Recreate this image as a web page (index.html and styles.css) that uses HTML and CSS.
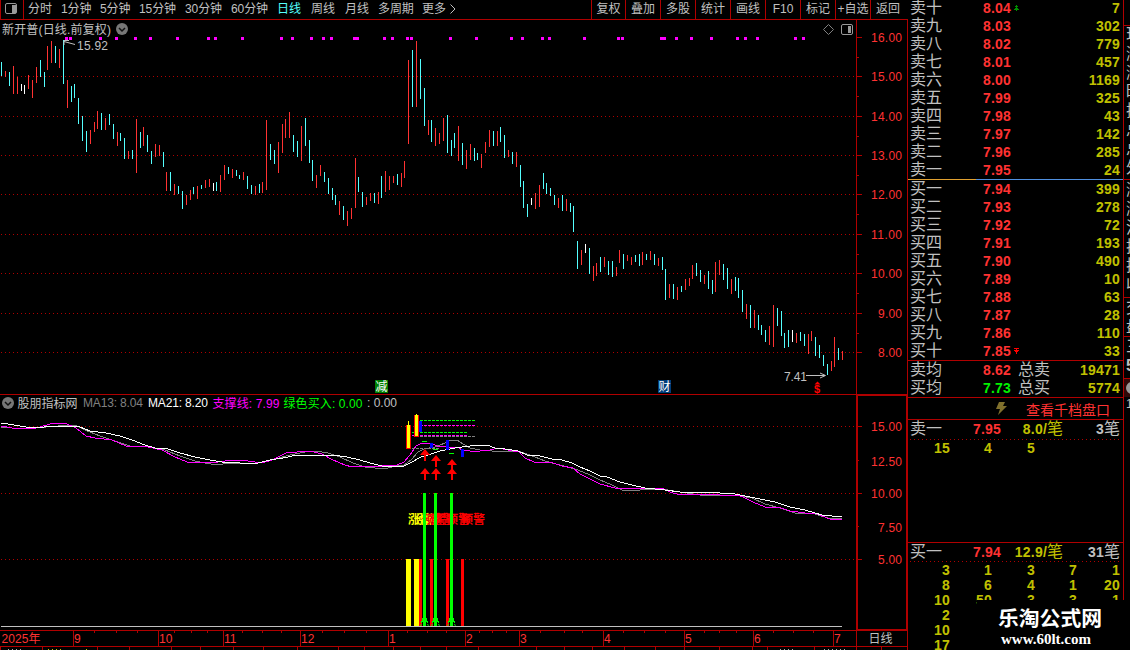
FILE: index.html
```html
<!DOCTYPE html>
<html lang="zh-CN">
<head>
  <meta charset="UTF-8" />
  <meta name="viewport" content="width=device-width, initial-scale=1.0"/>
  <title>新开普 日线</title>
  <link rel="stylesheet" href="styles.css">
</head>
<body>
  <div class="app">
    <main class="charts">
      <header class="toolbar">
        <div class="layout-btn">
          <svg width="13" height="12" viewBox="0 0 13 12"><rect x="0.5" y="0.5" width="11" height="10" rx="1.5" fill="none" stroke="#999"/><path d="M7 2h4v8H7z" fill="#999"/></svg>
        </div>
        <nav class="periods">
          <span>分时</span><span>1分钟</span><span>5分钟</span><span>15分钟</span><span>30分钟</span><span>60分钟</span><span class="active">日线</span><span>周线</span><span>月线</span><span>多周期</span>
          <span>更多<svg width="11" height="12" viewBox="0 0 11 12"><path d="M4.500 1.500l4.500 4.500l-4.500 4.500" fill="none" stroke="#c0c0c0"/></svg></span>
        </nav>
        <div class="tools">
          <span>复权</span><span>叠加</span><span>多股</span><span>统计</span><span>画线</span><span>F10</span><span>标记</span><span>+自选</span><span>返回</span>
        </div>
      </header>

      <svg class="kline" width="908" height="374" viewBox="0 20 908 374">
        <g id="grid"></g>
        <g id="events"></g>
        <g id="bars"></g>
        <path class="frame" d="M856.500 20V394M907.500 20V394"/>
        <g id="priceAxis"></g>
        <text class="label" x="2" y="34" textLength="109">新开普(日线.前复权)</text>
        <circle cx="122" cy="29" r="6" fill="#777"/>
        <path d="M119 28l3 3l3-3" fill="none" stroke="#111" stroke-width="1.500"/>
        <path d="M828.500 24.500l5 5l-5 5l-5-5z" fill="none" stroke="#808080"/>
        <rect x="841.500" y="24.500" width="11" height="10" rx="1.500" fill="none" stroke="#999"/>
        <path d="M848 26h3v7h-3z" fill="#999"/>
        <path class="pointer" d="M75 44.500L64 41.500M64 45V40.500H69"/>
        <text class="label" x="77" y="50" textLength="31">15.92</text>
        <text class="label" x="784" y="381" textLength="23">7.41</text>
        <path class="pointer" d="M806 375.500H825M820 373l5.500 2.500l-5.500 2.500"/>
        <rect x="375" y="380" width="13" height="13" fill="#008000"/>
        <text class="mark" x="375.500" y="391">减</text>
        <rect x="658" y="380" width="13" height="13" fill="#003c78"/>
        <text class="mark" x="658.500" y="391">财</text>
        <path d="M814.500 384.500l3-3l3 3z" fill="#f00"/>
        <text class="dollar" x="814" y="393">$</text>
      </svg>

      <svg class="indicator" width="908" height="236" viewBox="0 394 908 236">
        <g id="subGrid"></g>
        <path class="frame" d="M0 394.500H856"/>
        <path class="frame thick" d="M857 395H907V630H857z"/>
        <g id="subAxis"></g>
        <circle cx="8" cy="403" r="6" fill="#777"/>
        <path d="M5 402l3 3l3-3" fill="none" stroke="#111" stroke-width="1.500"/>
        <text class="label" x="17.500" y="407.500">股朋指标网</text>
        <text class="label grey" x="83" y="407" textLength="60">MA13: 8.04</text>
        <text class="label white" x="148" y="407" textLength="60">MA21: 8.20</text>
        <text class="label magenta" x="212.500" y="407.500" textLength="67">支撑线: 7.99</text>
        <text class="label green" x="283.500" y="407.500" textLength="79">绿色买入: 0.00</text>
        <text class="label" x="367" y="407" textLength="30">: 0.00</text>
        <g id="lines"></g>
        <g id="signals"></g>
      </svg>

      <svg class="timeline" width="908" height="20" viewBox="0 630 908 20">
        <path class="frame" d="M0 630.500H908M0 646.500H908M856.500 631V650M907.500 631V650"/>
        <g id="dates"></g>
        <text class="label" x="868.500" y="643">日线</text>
        <path d="M8 649.500h14M780 649.500h14M824 649.500h24" stroke="#aaa" stroke-dasharray="1 3"/>
        <path d="M48 649.500h14M86 649.500h1" stroke="#c0c000" stroke-dasharray="1 3"/>
      </svg>
    </main>

    <aside class="quote">
      <div class="book" id="sells"></div>
      <div class="ratio"></div>
      <div class="book" id="buys"></div>
      <div class="totals">
        <div class="total-row"><span>卖均</span><b class="up">8.62</b><span>总卖</span><b class="vol">19471</b></div>
        <div class="total-row"><span>买均</span><b class="down">7.73</b><span>总买</span><b class="vol">5774</b></div>
      </div>
      <div class="more">
        <svg width="13" height="13" viewBox="0 0 13 13"><path d="M4 0h6L8 4h4L3 13l2-6H1z" fill="#80702c"/></svg>
        <span>查看千档盘口</span>
      </div>
      <div class="queue sell-queue">
        <div class="queue-head"><span>卖一</span><b class="up">7.95</b><span class="vol"><b>8.0/</b>笔</span><span><b>3</b>笔</span></div>
        <div class="orders first"><b>15</b><b>4</b><b>5</b></div>
      </div>
      <div class="queue buy-queue">
        <div class="queue-head"><span>买一</span><b class="up">7.94</b><span class="vol"><b>12.9/</b>笔</span><span><b>31</b>笔</span></div>
        <div class="orders"><b>3</b><b>1</b><b>3</b><b>7</b><b>1</b></div>
        <div class="orders"><b>8</b><b>6</b><b>4</b><b>1</b><b>20</b></div>
        <div class="orders"><b>10</b><b>50</b><b>3</b><b>3</b><b>1</b></div>
        <div class="orders"><b>2</b></div>
        <div class="orders"><b>10</b></div>
        <div class="orders"><b>17</b></div>
      </div>
    </aside>

    <aside class="edge">
      <div class="edge-group names"><span>现</span><span>涨</span><span>涨</span><span>昨</span><span>振</span><span>总</span><span>总</span><span>外</span></div>
      <div class="edge-group stats"><span>涨</span><span>涨</span><span>流</span><span>换</span><span>换</span><span>收</span></div>
      <div class="edge-group pair"><span>交</span><span>盘</span></div>
      <div class="edge-group pair"><span>三</span><span><b>5</b></span></div>
      <div class="edge-tab"><i></i></div>
      <div class="edge-group last">1</div>
    </aside>

    <div class="watermark">
      <div class="site-name">乐淘公式网</div>
      <div class="site-url">www.60lt.com</div>
    </div>
  </div>

  <script>
  const RED = '#ff3232', CYAN = '#54ffff', WHITE = '#ffffff';

  function put(id, html) {
    document.getElementById(id).innerHTML = html;
  }

  // color, x, high, low
  const bars = `c1 62 76,r5 71 77,c9 72 86,r13 66 94,r17 77 94,w21 84 91,w24 85 94,r28 75 89,r32 80 98,r36 67 83,
c40 60 77,c44 72 87,r47 46 70,r51 41 63,c55 46 63,r59 49 68,c63 40 84,r67 80 108,c71 86 102,c74 84 98,c78 98 124,
c82 116 141,c86 131 152,r90 130 144,r94 122 132,r97 111 129,c101 113 130,r105 118 130,c109 114 125,c113 124 139,
r117 132 146,c120 133 141,c124 138 159,r128 151 159,c132 150 159,r136 119 173,c140 132 148,r143 127 146,c147 135 152,
c151 151 164,r155 144 157,r159 145 156,c163 152 167,r166 172 191,c170 172 191,r174 184 195,c178 186 194,c182 191 209,
r186 195 205,r190 190 200,c193 187 194,r197 186 199,c201 185 189,r205 180 188,r209 179 187,w213 183 191,c216 182 191,
r220 175 192,r224 165 180,c228 167 174,r232 169 178,c236 170 176,c239 175 179,r243 172 180,c247 176 189,c251 185 194,
r255 186 195,c259 184 193,r262 182 193,r266 120 190,c270 144 160,c274 150 164,r278 142 173,r282 124 153,r285 119 138,
r289 112 138,c293 135 152,c297 141 157,r301 126 161,c305 118 146,c309 140 163,c312 160 181,r316 175 188,r320 165 176,
c324 172 182,c328 178 194,c332 188 200,c335 195 205,r339 201 215,c343 206 220,r347 211 226,r351 208 219,r355 158 208,
c358 177 192,c362 192 207,r366 197 205,r370 193 201,c374 193 203,r378 192 204,c381 176 198,r385 171 192,r389 176 190,
r393 176 183,c397 174 185,r401 173 187,r404 161 178,r408 60 144,c412 50 107,r416 41 107,c420 59 99,c424 88 126,
r428 120 135,c431 120 142,r435 128 146,r439 133 144,r443 118 141,c447 115 153,c451 140 156,c454 133 148,r458 126 161,
c462 143 165,r466 150 169,r470 144 160,c474 148 161,c477 153 160,r481 154 168,r485 142 153,r489 130 147,c493 131 146,
r497 131 146,c500 127 142,c504 135 158,r508 150 157,c512 152 164,r516 152 167,c520 165 187,c523 181 208,c527 204 217,
w531 198 205,r535 193 209,r539 185 207,c543 173 189,c546 183 194,c550 188 196,c554 195 205,r558 198 208,c562 195 211,
r566 199 211,c570 203 212,c573 206 232,c577 241 269,r581 250 265,w585 244 253,c589 248 274,r593 266 281,r596 263 276,
c600 257 272,r604 257 267,c608 261 275,c612 261 277,r616 267 276,r619 250 263,c623 254 269,r627 255 261,r631 257 265,
c635 255 262,c639 254 266,r642 252 265,c646 254 260,r650 251 260,c654 254 265,r658 258 266,c662 257 270,c665 269 300,
r669 284 298,c673 284 299,r677 287 300,c681 286 292,r685 279 290,r689 278 286,r692 265 279,c696 263 276,c700 270 282,
r704 275 284,c708 271 289,c712 280 294,r715 262 292,r719 260 275,c723 264 280,c727 268 289,r731 279 294,c735 277 291,
c738 278 298,c742 290 312,r746 304 319,c750 305 328,r754 310 328,c758 315 330,c761 325 335,c765 330 342,r769 326 345,
r773 305 347,c777 308 326,c781 311 336,c784 333 348,c788 330 347,w792 330 342,r796 333 343,c800 332 341,c804 334 346,
r808 334 354,r811 331 341,c815 337 356,c819 345 358,c823 355 366,c827 364 375,r831 361 371,r834 337 367,c838 348 360,
r842 351 360`;
  const barColor = { r: RED, c: CYAN, w: WHITE };
  put('bars', bars.split(',').map(b => {
    const s = b.trim();
    const [x, top, bottom] = s.slice(1).split(' ').map(Number);
    return `<rect x="${x}" y="${top}" width="1" height="${bottom - top}" fill="${barColor[s[0]]}"/>`;
  }).join(''));

  const events = [65,69,99,115,134,149,176,207,214,241,280,291,310,322,330,353,356,383,391,406,410,449,475,510,521,541,548,
    583,617,621,660,663,675,690,710,736,744,756,794,802];
  put('events', events.map(x => `<rect x="${x}" y="37" width="3" height="3" fill="#f0f"/>`).join(''));

  function gridLine(y) {
    return `<path class="dots" d="M1 ${y}.5H856"/>`;
  }
  function axisLabel(y, text) {
    return `<text class="axis" x="871" y="${y}" ${text.length === 5 ? 'textLength="31"' : 'dx="7" textLength="24"'}>${text}</text>`;
  }

  const priceRows = [37, 76, 116, 155, 194, 234, 273, 313, 352];
  put('grid', priceRows.slice(1).map(gridLine).join(''));
  put('priceAxis', priceRows.map((y, i) =>
    `<path class="frame" d="M857 ${y}.5h5"/>` +
    (i < 8 ? `<path class="frame" d="M857 ${y + 20}.5h2"/>` : '') +
    axisLabel(y + 5, (16 - i) + '.00')).join(''));

  put('subGrid', [426, 493, 559].map(gridLine).join(''));
  put('subAxis', [[426, '15.00', 431], [460, '12.50', 466], [493, '10.00', 498], [526, '7.50', 532], [559, '5.00', 564]]
    .map(([y, t, ty], i) => `<path class="frame" d="M858 ${y}.5h${i % 2 ? 1 : 4}"/>` + axisLabel(ty, t)).join(''));

  const ma13 = '1,427 12,428 35,428 58,426 75,425 85,430 100,436 115,441 130,446 150,447 165,450 180,456 195,461 205,463 217,465 230,463 258,463 275,459 290,455 305,452 315,451 328,453 340,457 353,463 365,467 375,468 388,468 395,466 404,465 411,460 418,452 424,449 435,447 445,443 450,440 457,440 463,444 470,448 480,450 492,451 518,451 530,455 545,461 560,465 575,469 588,474 600,480 612,485 622,490 640,490 662,489 680,492 700,495 715,496 735,495 752,498 765,504 780,508 795,513 815,514 828,518 842,518';
  const support = '1,426 12,428 32,429 40,427 50,424 57,423 67,424 76,428 86,436 95,438 112,440 126,446 148,447 162,450 175,457 187,462 212,463 225,461 235,460 248,461 262,463 272,460 286,453 297,452 310,451 322,454 333,460 345,465 352,467 365,466 382,466 397,465 404,462 410,455 416,446 422,443 430,443 437,446 447,447 458,447 462,450 470,451 480,451 490,450 498,448 508,450 519,452 525,458 534,462 550,462 562,466 573,468 580,474 590,479 600,484 615,488 640,488 662,488 670,492 680,495 700,494 720,495 738,495 745,498 755,503 768,508 778,507 790,511 805,513 817,514 830,519 842,519';
  const ma21 = '1,423 8,424 20,426 32,428 44,427 58,426 70,426 80,427 90,431 106,433 120,436 132,440 145,445 155,448 168,449 180,453 195,457 210,460 222,462 240,463 258,463 270,460 283,458 297,455 315,455 332,455 347,457 360,460 370,463 382,466 404,466 412,462 421,457 428,455 440,451 455,448 470,446 480,445 487,445 495,448 505,449 518,451 527,455 540,456 552,459 562,460 572,463 580,467 590,471 600,476 607,477 620,482 632,485 645,488 665,490 680,492 700,492 720,493 735,494 755,498 775,502 790,507 805,510 815,513 822,515 832,516 842,517';
  put('lines', [[ma13, '#808080'], [support, '#f0f'], [ma21, '#fff']].map(([pts, c]) =>
    `<polyline class="ma" points="${pts}" stroke="${c}"/>`).join(''));

  function rect(x, y, w, h, c) {
    return `<rect x="${x}" y="${y}" width="${w}" height="${h}" fill="${c}"/>`;
  }
  function dash(x1, x2, y, c) {
    return `<path d="M${x1} ${y}.5H${x2}" stroke="${c}" stroke-dasharray="3 1"/>`;
  }
  function arrow(x, y, h) {
    return `<path d="M${x} ${y}l5 6h-4v${h - 6}h-2v-${h - 6}h-4z" fill="#f00"/>`;
  }
  let s = '';
  // support / pressure levels
  s += dash(416, 475, 420, '#0f0') + dash(416, 475, 425, '#f0f') + dash(416, 475, 436, '#808080');
  s += dash(408, 467, 432, '#0f0') + dash(408, 467, 435, '#f0f') + dash(408, 440, 448, '#808080');
  // highlighted candles
  s += rect(406, 425, 5, 24, '#f00') + rect(407, 425, 3, 23, '#ff0') + rect(408, 421, 1, 4, '#ff0');
  s += rect(414, 415, 5, 22, '#f00') + rect(415, 415, 3, 21, '#ff0') + rect(416, 414, 1, 2, '#ff0');
  s += rect(419, 421, 3, 11, '#00f') + rect(430, 443, 3, 5, '#00f') + rect(446, 440, 3, 10, '#00f') + rect(461, 449, 3, 8, '#00f');
  s += rect(422, 441, 5, 1, '#0f0') + rect(433, 449, 5, 1, '#0f0') + rect(449, 453, 5, 1, '#0f0');
  s += arrow(425, 449, 12) + arrow(436, 455, 12) + arrow(452, 459, 11);
  [425, 436, 452].forEach(x => s += arrow(x, 468, 12));
  // signal columns
  [406, 414].forEach(x => s += rect(x, 559, 5, 67, '#ff0'));
  [419, 430, 446, 461].forEach(x => s += rect(x, 559, 3, 67, '#f00'));
  [408, 416].forEach(x => s += `<text class="alert" x="${x}" y="524" fill="#ff0">涨停</text>`);
  [422, 430, 446, 461].forEach(x => s += `<text class="alert" x="${x}" y="524" fill="#f00">预警</text>`);
  [423, 434, 450].forEach(x => {
    s += rect(x, 493, 3, 133, '#0f0');
    s += rect(x - 1, 618, 5, 4, '#0f0');
    s += `<path d="M${x - 1.5} 621v3l-1 2M${x + 4.5} 621v3l1 2" fill="none" stroke="#0f0" stroke-dasharray="2 1"/>`;
  });
  s += rect(1, 626, 841, 1, '#c0c0c0');
  put('signals', s);

  const months = [[73, '9'], [158, '10'], [223, '11'], [300, '12'], [388, '1'], [465, '2'], [519, '3'], [603, '4'], [684, '5'], [753, '6'], [833, '7']];
  const weeks = [94,116,137,174,191,207,242,262,281,322,344,366,407,427,446,479,492,506,540,564,582,623,644,665,704,719,736,773,793,813];
  const tabs = [0,42,97,129,171,200,233,263,297,338,364,393,420,446,478,536,564,592,624,655,684,719,752,767,814,881];
  put('dates',
    '<text class="axis" x="1.500" y="643" textLength="39">2025年</text>' +
    months.map(([x, m]) => `<path class="frame" d="M${x}.5 631V646"/><text class="axis" x="${x + 1}" y="643">${m}</text>`).join('') +
    weeks.map(x => `<path class="frame" d="M${x}.5 631v2"/>`).join('') +
    tabs.map(x => `<path class="frame" d="M${x}.5 647v3"/>`).join(''));

  // order book
  const num = '一二三四五六七八九十';
  const sellVol = [24, 285, 142, 43, 325, 1169, 457, 779, 302, 7];
  const buyVol = [399, 278, 72, 193, 490, 10, 63, 28, 110, 33];
  const upMark = '<svg width="5" height="6" viewBox="0 0 5 6"><path d="M2 0h1v1h1v1H3v1h1v1h1v1H3v1H2V5H0V4h1V3h1V2H1V1h1z" fill="#009000"/></svg>';
  const downMark = '<svg width="5" height="6" viewBox="0 0 5 6"><path d="M0 0h5v1H3v1h2v1H4v1H3v2H2V4H1V3H0V2h2V1H0z" fill="#f00"/></svg>';
  function bookRow(side, i, price, vol, mark) {
    return `<div class="book-row"><span>${side}${num[i]}</span><b class="up">${price.toFixed(2)}${mark}</b><b class="vol">${vol}</b></div>`;
  }
  let sells = '', buys = '';
  for (let i = 9; i >= 0; i--) sells += bookRow('卖', i, 7.95 + i / 100, sellVol[i], i === 9 ? upMark : '');
  for (let i = 0; i < 10; i++) buys += bookRow('买', i, 7.94 - i / 100, buyVol[i], i === 9 ? downMark : '');
  put('sells', sells);
  put('buys', buys);
  </script>
</body>
</html>
```
FILE: styles.css
```css
* {
  box-sizing: border-box;
}
body {
  margin: 0;
  background: #000;
  color: #c0c0c0;
  font-family: "Liberation Sans", "Noto Sans CJK SC", sans-serif;
  font-size: 12px;
  overflow: hidden;
}
svg {
  display: block;
}
.app {
  position: relative;
  display: grid;
  grid-template-columns: 908px 216px 6px;
  width: 1130px;
  height: 650px;
  overflow: hidden;
}
.charts {
  display: flex;
  flex-direction: column;
}

/* toolbar */
.toolbar {
  display: flex;
  height: 20px;
  line-height: 19px;
  border-bottom: 1px solid #b00000;
  white-space: nowrap;
}
.layout-btn {
  width: 24px;
  padding: 3px 0 0 4px;
  border-left: 1px solid #b00000;
  border-right: 1px solid #b00000;
}
.periods {
  display: grid;
  grid-template-columns: 33px 39px 39px 46px 46px 46px 34px 34px 33px 44px auto;
  padding-left: 4px;
  letter-spacing: -0.1px;
}
.periods svg {
  display: inline-block;
  vertical-align: -2px;
}
.periods .active {
  color: #54ffff;
}
.tools {
  display: grid;
  grid-template-columns: 34px repeat(8, 35px) 3px;
  margin-left: auto;
}
.tools span {
  border-left: 1px solid #b00000;
  text-align: center;
}

/* charts */
.frame {
  fill: none;
  stroke: #b00000;
  stroke-width: 1;
}
.frame.thick {
  stroke-width: 2;
}
.dots {
  stroke: #b00000;
  stroke-dasharray: 1 3;
}
.label {
  fill: #c0c0c0;
  font-size: 12px;
}
.label.grey {
  fill: #808080;
}
.label.white {
  fill: #fff;
}
.label.magenta {
  fill: #f0f;
}
.label.green {
  fill: #0f0;
}
.axis {
  fill: #ff3232;
  font-size: 12px;
}
.mark {
  fill: #fff;
  font-size: 12px;
}
.dollar {
  fill: #f00;
  font-size: 11px;
  font-weight: bold;
}
.pointer {
  fill: none;
  stroke: #c0c0c0;
}
.ma {
  fill: none;
  stroke-width: 1;
  shape-rendering: crispEdges;
}
.alert {
  font-size: 12px;
  font-weight: bold;
}

/* quote panel */
.quote {
  border-right: 1px solid #b00000;
  font-size: 16px;
  white-space: nowrap;
  overflow: hidden;
}
.quote b {
  font-size: 14px;
  letter-spacing: 0.2px;
}
.up {
  color: #ff3232;
}
.down {
  color: #00f000;
}
.vol {
  color: #c0c000;
  text-align: right;
}
.book-row,
.total-row,
.queue-head {
  display: grid;
  height: 18px;
  line-height: 18px;
  padding: 0 3px 0 2px;
}
.book-row {
  grid-template-columns: 73px 60px 1fr;
}
.book-row svg {
  display: inline-block;
  margin-left: 3px;
  vertical-align: 2px;
}
#sells {
  margin-top: -1px;
}
.ratio {
  height: 1px;
  background: linear-gradient(to right, #e0a030 68px, #5090e0 68px);
}
.totals {
  border-top: 1px solid #b00000;
  border-bottom: 1px solid #b00000;
}
.total-row {
  grid-template-columns: 73px 35px 35px 1fr;
}
.more {
  display: flex;
  align-items: center;
  height: 22px;
  padding-left: 87px;
  border-bottom: 1px solid #b00000;
  color: #ff3232;
  font-size: 14px;
}
.more span {
  margin-left: 18px;
}
.sell-queue {
  height: 123px;
  border-bottom: 1px solid #b00000;
}
.queue-head {
  grid-template-columns: 63px 30px 60px 1fr;
  height: 20px;
  background: repeating-linear-gradient(to right, #b00000 0 1px, transparent 1px 4px) 2px 100% / 212px 1px no-repeat;
}
.buy-queue .queue-head {
  height: 19px;
  margin-bottom: 1px;
}
.queue-head span:last-child {
  text-align: right;
}
.orders {
  display: grid;
  grid-template-columns: 42px 42px 43px 42px 43px;
  height: 15px;
  line-height: 15px;
  color: #c0c000;
  text-align: right;
}
.orders.first {
  line-height: 17px;
}

/* neighbouring panel, cut off by the window edge */
.edge {
  font-size: 16px;
  overflow: hidden;
}
.edge-group {
  width: 30px;
  padding-left: 2px;
  border-bottom: 1px solid #b00000;
}
.edge-group span {
  display: block;
  height: 19px;
  line-height: 19px;
}
.names {
  height: 180px;
  padding-top: 25px;
  background: linear-gradient(#b00000, #b00000) 0 25px / 100% 1px no-repeat;
}
.stats {
  height: 118px;
}
.pair {
  height: 39px;
}
.pair + .pair {
  height: 42px;
}
.edge-tab {
  width: 20px;
  height: 18px;
  padding: 3px 0 0 2px;
  background: #300808;
}
.edge-tab i {
  display: block;
  width: 12px;
  height: 12px;
  border-radius: 50%;
  background: #999;
}
.last {
  border: 0;
  font-size: 12px;
}

.watermark {
  position: absolute;
  left: 977px;
  top: 600px;
  width: 153px;
  height: 50px;
  background: #000;
  color: #fff;
  font-weight: bold;
}
.site-name {
  padding: 7px 0 0 21px;
  font-size: 20.8px;
  line-height: 24px;
}
.site-url {
  padding-left: 24px;
  font-family: "Liberation Serif", serif;
  font-size: 15px;
  line-height: 16px;
}
```
